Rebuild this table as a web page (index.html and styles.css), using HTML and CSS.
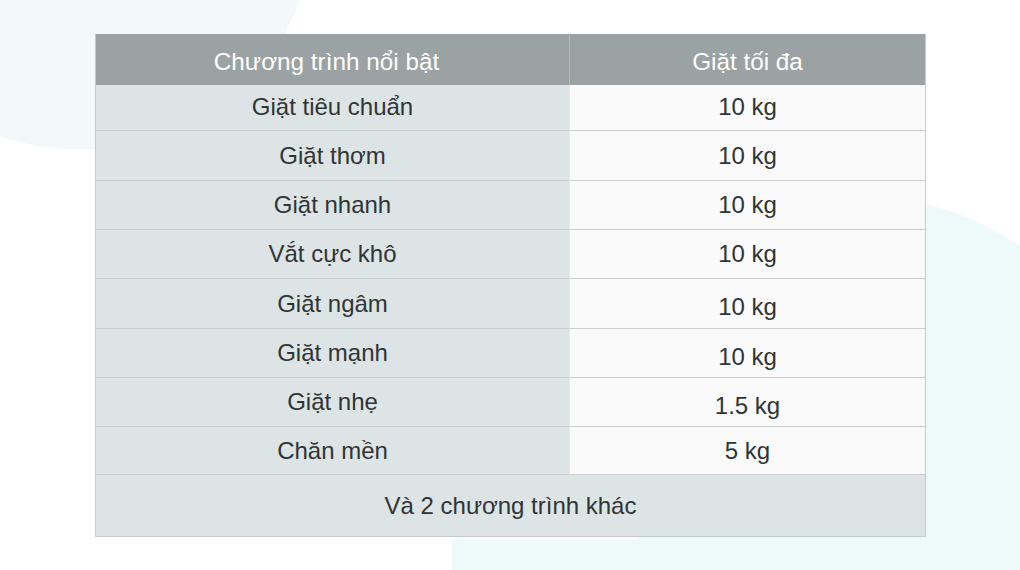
FILE: index.html
```html
<!DOCTYPE html>
<html lang="vi">
<head>
<meta charset="utf-8">
<title>Chương trình nổi bật</title>
<link rel="stylesheet" href="styles.css">
</head>
<body>
<div class="page">
  <div class="table">
    <div class="th th-left">Chương trình nổi bật</div>
    <div class="th th-right">Giặt tối đa</div>

    <div class="td td-name first">Giặt tiêu chuẩn</div>
    <div class="td td-val first">10 kg</div>

    <div class="td td-name">Giặt thơm</div>
    <div class="td td-val">10 kg</div>

    <div class="td td-name">Giặt nhanh</div>
    <div class="td td-val">10 kg</div>

    <div class="td td-name">Vắt cực khô</div>
    <div class="td td-val">10 kg</div>

    <div class="td td-name">Giặt ngâm</div>
    <div class="td td-val low">10 kg</div>

    <div class="td td-name">Giặt mạnh</div>
    <div class="td td-val low">10 kg</div>

    <div class="td td-name">Giặt nhẹ</div>
    <div class="td td-val low">1.5 kg</div>

    <div class="td td-name">Chăn mền</div>
    <div class="td td-val">5 kg</div>

    <div class="foot">Và 2 chương trình khác</div>
  </div>
</div>
</body>
</html>
```

FILE: styles.css
```css
* { box-sizing: border-box; }

html, body {
  margin: 0;
  padding: 0;
}

body {
  font-family: "Liberation Sans", Arial, Helvetica, sans-serif;
  color: #313435;
  background: #ffffff;
}

.page {
  width: 1020px;
  height: 570px;
  overflow: hidden;
  padding: 34px 0 0 95px;
  background:
    radial-gradient(ellipse 230px 212px at 80px -62px, #f3f9fb 99.5%, rgba(243,249,251,0) 100%),
    radial-gradient(circle 252px at 872px 450px, #eef9fa 99.5%, rgba(238,249,250,0) 100%),
    linear-gradient(#eef9fa, #eef9fa) 452px 540px / 568px 30px no-repeat,
    #ffffff;
}

.table {
  width: 831px;
  display: grid;
  grid-template-columns: 473px 1fr;
  grid-template-rows: 51px 46px 50px 49px 49px 50px 49px 49px 48px 61px;
  border-left: 1px solid #c6cbcc;
  border-right: 1px solid #c6cbcc;
  border-bottom: 1px solid #c6cbcc;
  font-size: 24px;
}

.th {
  background: #9aa2a3;
  color: #ffffff;
  display: flex;
  align-items: center;
  justify-content: center;
  padding-top: 4px;
  font-size: 24.3px;
}

.th-left {
  padding-right: 12px;
}

.th-right {
  border-left: 1px solid #b3babb;
}

.td {
  display: flex;
  align-items: center;
  justify-content: center;
  border-bottom: 1px solid #c9cecf;
  padding-bottom: 0;
}

.td.first {
  padding-bottom: 2px;
}

.td-name {
  background: #dce4e5;
}

.td-val {
  background: #fafafa;
  border-left: 1px solid #e3e8e8;
}

.td-val.low {
  padding-top: 7px;
}

.foot {
  grid-column: 1 / 3;
  background: #dce4e5;
  display: flex;
  align-items: center;
  justify-content: center;
  padding-top: 1px;
}
```
